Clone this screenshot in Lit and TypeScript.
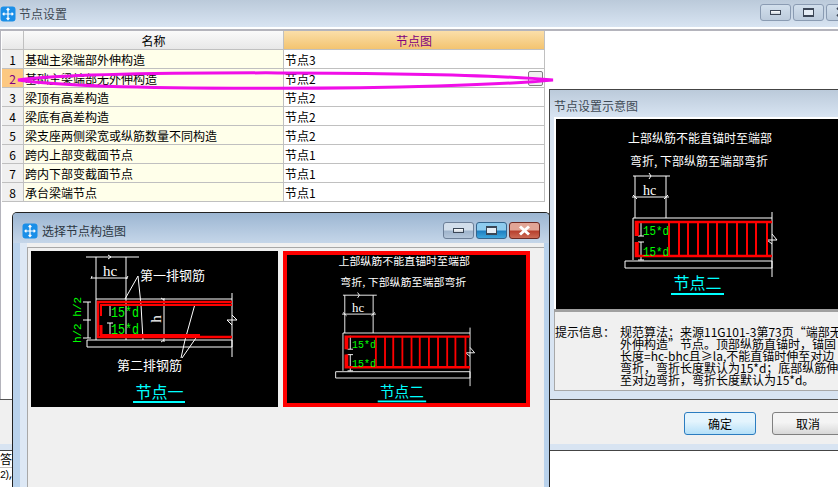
import { LitElement, html, svg, css } from 'lit';
import { customElement } from 'lit/decorators.js';

const ROWS = [
  ['基础主梁端部外伸构造', '节点3'],
  ['基础主梁端部无外伸构造', '节点2'],
  ['梁顶有高差构造', '节点2'],
  ['梁底有高差构造', '节点2'],
  ['梁支座两侧梁宽或纵筋数量不同构造', '节点2'],
  ['跨内上部变截面节点', '节点1'],
  ['跨内下部变截面节点', '节点1'],
  ['承台梁端节点', '节点1'],
];

const INFO = [
  '规范算法：来源11G101-3第73页“端部无',
  '外伸构造”节点。顶部纵筋直锚时，锚固',
  '长度=hc-bhc且≥la,不能直锚时伸至对边',
  '弯折，弯折长度默认为15*d；底部纵筋伸',
  '至对边弯折，弯折长度默认为15*d。',
];

const STIRRUPS = [669, 679, 688, 698, 708, 717, 727, 737, 747, 756, 767];

const appIcon = html`<svg class="app-icon" viewBox="0 0 16 16">
  <rect x="0.5" y="0.5" width="15" height="15" rx="3" fill="#1a8fe8" />
  <path
    d="M8 2.5v11M3 8h10M6.6 4 8 2.5 9.4 4M6.6 12 8 13.5 9.4 12M4.4 6.6 3 8l1.4 1.4M11.6 6.6 13 8l-1.4 1.4"
    fill="none"
    stroke="#fff"
    stroke-width="1.2"
  />
</svg>`;

// node 2 is drawn once in the coordinates of the preview window, the thumbnail just uses another viewBox
const nodeTwo = svg`
  <g fill="#fff" font-size="12" text-anchor="middle">
    <text x="700" y="142.5">上部纵筋不能直锚时至端部</text>
    <text x="699" y="165.5">弯折, 下部纵筋至端部弯折</text>
  </g>
  <path d="M633 176H670M649 173l2 3-2 3M635 176V218M666 176V218M632 197H669M633 195l4 4M664 199l4-4
    M633 218H772M772 212V277M633 218V260M625 261H772V268H625ZM641 221V236M638 236H644M641 242V260M638 242H644M638 260H644
    M767 240H777L772 234M767 240L772 244"
    fill="none" stroke="#fff" />
  <text class="serif" x="649.5" y="195" fill="#fff" font-size="14" text-anchor="middle">hc</text>
  <path d="M772 222H636V236M636 242V256H772" fill="none" stroke="#f00" stroke-width="2.6" />
  <path d="M637.5 222V236M637.5 242V256" stroke="#f00" stroke-width="2.6" />
  ${STIRRUPS.map((x) => svg`<path d="M${x} 222V256" stroke="#f00" stroke-width="2" />`)}
  <g class="mono" fill="#0f0" font-size="13">
    <text x="643" y="235" textLength="26" lengthAdjust="spacingAndGlyphs">15*d</text>
    <text x="643" y="256" textLength="26" lengthAdjust="spacingAndGlyphs">15*d</text>
  </g>
  <text x="697.5" y="289" fill="#0ff" font-size="16" text-anchor="middle">节点二</text>
  <path d="M671 294H724" stroke="#0ff" stroke-width="2" />
`;

@customElement('app-root')
export class AppRoot extends LitElement {
  static styles = css`
    :host {
      display: block;
      position: relative;
      width: 838px;
      height: 487px;
      overflow: hidden;
      background: #fff;
      font: 12px/1 'Noto Sans CJK SC', 'Liberation Sans', sans-serif;
      color: #000;
    }

    svg text {
      font-family: 'Noto Sans CJK SC', 'Liberation Sans', sans-serif;
    }

    svg .mono,
    svg .mono text {
      font-family: 'Liberation Mono', monospace;
    }

    svg .serif {
      font-family: 'Liberation Serif', serif;
    }

    .main {
      display: flex;
      flex-direction: column;
      height: 451px;
      border-bottom: 1px solid #444;
      box-sizing: border-box;
    }

    .titlebar {
      flex: none;
      display: flex;
      align-items: center;
      gap: 3px;
      height: 27px;
      background: linear-gradient(#bbcada, #d8e4f2);
      color: #3f4a55;
      box-sizing: border-box;
    }

    .titlebar .label {
      flex: 1;
      white-space: nowrap;
      padding-top: 1px;
    }

    .app-icon {
      flex: none;
      width: 16px;
      height: 16px;
    }

    .main > .titlebar {
      overflow: hidden;
    }

    .caption-buttons {
      display: flex;
      gap: 2px;
      margin-right: -19px;
      margin-top: -3px;
    }

    .caption {
      display: flex;
      align-items: center;
      justify-content: center;
      width: 31px;
      height: 17px;
      border: 1px solid #8a9bb2;
      border-radius: 3px;
      box-sizing: border-box;
      background: linear-gradient(#d2dfec, #bccbdc);
    }

    .glyph {
      display: block;
      box-sizing: border-box;
      background: #fff;
      border: 1px solid #3c4656;
    }

    .glyph.min {
      width: 11px;
      height: 5px;
      background: linear-gradient(#fff, #c9d2dc);
    }

    .glyph.max {
      width: 11px;
      height: 9px;
      background: #e6edf5;
      border-width: 2px 1px;
    }

    .caption svg {
      width: 13px;
      height: 10px;
    }

    .content {
      flex: 1;
      min-height: 0;
      border-top: 2px solid #b4b4bc;
      margin-top: 2px;
      padding-left: 1px;
      background: #fff;
      border-left: 1px solid #b4b4bc;
      box-sizing: border-box;
    }

    .grid {
      display: grid;
      grid-template-columns: 22px 260px 261px;
      grid-auto-rows: 19px;
      width: 543px;
    }

    .cell {
      display: flex;
      align-items: center;
      padding: 1px 0 0 1px;
      border-right: 1px solid #c0c0c0;
      border-bottom: 1px solid #c0c0c0;
      box-sizing: border-box;
      white-space: nowrap;
      overflow: hidden;
      position: relative;
    }

    .head {
      justify-content: center;
      padding-left: 0;
      background: linear-gradient(#fafafa, #e8e8e8);
    }

    .head.active {
      background: linear-gradient(#fbdfa9, #f3c470);
      color: #800080;
    }

    .num {
      justify-content: center;
      padding-left: 0;
      background: #f0f0f0;
    }

    .num.current {
      background: #fcc881;
      color: #800080;
    }

    .name {
      background: #ffffea;
    }

    .pick {
      position: absolute;
      right: 1px;
      top: 2px;
      width: 15px;
      height: 15px;
      border: 1px solid #808080;
      border-radius: 2px;
      background: #f0f0f0;
      box-sizing: border-box;
    }

    .footer {
      flex: none;
      display: flex;
      justify-content: flex-end;
      gap: 16px;
      height: 45px;
      padding-top: 12px;
      margin-right: -6px;
      border-top: 1px solid #555;
      background: #f0f0f0;
      box-sizing: border-box;
    }

    .btn {
      width: 72px;
      height: 23px;
      display: flex;
      align-items: center;
      justify-content: center;
      border: 1px solid #808080;
      border-radius: 3px;
      background: linear-gradient(#f4f4f4 45%, #d8d8d8);
      box-sizing: border-box;
    }

    .btn.primary {
      border: 1px solid #2b7cc0;
      background: linear-gradient(#e4f4fd 40%, #b5e0f8);
    }

    .band {
      flex: none;
      height: 6px;
      background: #d8e4f2;
    }

    .log {
      position: absolute;
      left: 0;
      top: 451px;
      width: 12px;
      height: 36px;
      overflow: hidden;
      white-space: nowrap;
    }

    .log-top {
      height: 16px;
      line-height: 16px;
      border-bottom: 1px solid #c0c0c0;
    }

    .log-bottom {
      font: 10px/16px 'Liberation Mono', monospace;
      letter-spacing: -2px;
    }

    .scribble {
      position: absolute;
      left: 0;
      top: 60px;
      width: 560px;
      height: 40px;
      pointer-events: none;
    }

    .preview {
      position: absolute;
      left: 549px;
      top: 89px;
      width: 289px;
      height: 310px;
      display: flex;
      flex-direction: column;
      border-top: 1px solid #444;
      border-left: 1px solid #444;
      box-sizing: border-box;
      background: #d8e4f2;
    }

    .preview .titlebar {
      padding: 3px 0 0 4px;
      height: 27px;
    }

    .preview-body {
      flex: 1;
      display: flex;
      flex-direction: column;
      padding: 0 0 8px 4px;
      min-height: 0;
    }

    .canvas-wrap {
      padding: 2px 0 0 2px;
      background: #fff;
      border-bottom: 3px solid #a0a0a0;
    }

    .canvas-wrap svg {
      display: block;
      width: 282px;
      height: 190px;
      background: #000;
    }

    .info {
      flex: 1;
      display: flex;
      gap: 10px;
      padding: 14px 0 0 0;
      background: #f0f0f0;
      border-left: 1px solid #a8a8a8;
      border-bottom: 1px solid #a8a8a8;
      overflow: hidden;
      white-space: nowrap;
    }

    .info-label {
      flex: none;
      width: 55px;
      text-align: right;
    }

    .info-lines div {
      height: 12px;
      line-height: 12px;
    }

    .dialog {
      position: absolute;
      left: 12px;
      top: 212px;
      width: 538px;
      height: 280px;
      display: flex;
      flex-direction: column;
      border: 1px solid #222;
      border-bottom: 0;
      border-radius: 5px 5px 0 0;
      background: #b9d2ec;
      box-sizing: border-box;
      overflow: hidden;
    }

    .dialog-title {
      flex: none;
      display: flex;
      align-items: center;
      gap: 4px;
      height: 30px;
      padding: 5px 9px 0 9px;
      background: linear-gradient(#9cb6d2, #c5d6e9);
      color: #2c3742;
      box-sizing: border-box;
    }

    .dialog-title .label {
      flex: 1;
    }

    .dialog-buttons {
      display: flex;
      gap: 2px;
    }

    .dialog-btn {
      display: flex;
      align-items: center;
      justify-content: center;
      width: 31px;
      height: 17px;
      border-radius: 3px;
      border: 1px solid #6c7f98;
      box-sizing: border-box;
      background: linear-gradient(#d2deeb 45%, #9fb4cc 55%, #b4c6da);
    }

    .dialog-btn.on {
      border-color: #35648c;
      background: linear-gradient(#8ecbee 45%, #1f80c2 55%, #3fa6dc);
    }

    .dialog-btn.close {
      border-color: #6d2a24;
      background: linear-gradient(#e2a596 45%, #b8402e 55%, #cc6a55);
    }

    .dialog-btn .glyph {
      border-color: #3a4656;
    }

    .dialog-btn svg {
      width: 15px;
      height: 11px;
    }

    .dialog-frame {
      flex: 1;
      padding-left: 7px;
      padding-right: 5px;
      min-height: 0;
    }

    .dialog-inner {
      height: 100%;
      padding: 4px 0 0 7px;
      background: linear-gradient(90deg, #dde8f5 7px, #f0f0f0 7px);
      background-color: #f0f0f0;
      box-sizing: border-box;
    }

    .thumbs {
      display: grid;
      grid-template-columns: 247px 247px;
      gap: 5px;
      height: 100%;
      padding: 3px 0 0 3px;
      background: #f0f0f0;
      border-left: 1px solid #a8a8a8;
      border-top: 1px solid #a8a8a8;
      box-sizing: border-box;
      align-content: start;
    }

    .thumb {
      display: block;
      width: 247px;
      height: 156px;
      background: #000;
    }

    .thumb.selected {
      outline: 4px solid #f00;
      outline-offset: -4px;
    }
  `;

  private renderCaption() {
    return html`<div class="caption-buttons">
      <div class="caption"><span class="glyph min"></span></div>
      <div class="caption"><span class="glyph max"></span></div>
      <div class="caption">
        <svg viewBox="0 0 13 10"><path d="M2 1l9 8M11 1l-9 8" stroke="#3c4656" stroke-width="2" /></svg>
      </div>
    </div>`;
  }

  private renderGrid() {
    return html`<div class="grid">
      <div class="cell head"></div>
      <div class="cell head">名称</div>
      <div class="cell head active">节点图</div>
      ${ROWS.map(
        ([name, node], i) => html`
          <div class="cell num ${i === 1 ? 'current' : ''}">${i + 1}</div>
          <div class="cell name">${name}</div>
          <div class="cell">${node}${i === 1 ? html`<span class="pick"></span>` : ''}</div>
        `,
      )}
    </div>`;
  }

  private renderNodeOne() {
    return html`<svg class="thumb" viewBox="31 251 247 156">
      <path d="M86 257H139M108 255l3 2-3 2M96 257V340M126 257V340M92 278H128M92 276l-1 3M128 276l-2 3
        M96 299H232M232 293V357M87 340H232V347H87ZM88 302V338M83 302H91M83 320H91M83 338H91
        M110 305V316M107 305H113M110 323V337M107 323H113M107 337H113M164 298V342M161 298l3 2M161 342l3-2
        M138 276L125 299M138 276L141 305L143 340M195 304L185 340L181 358M198 335L182 358
        M227 320H237L232 315M227 320L232 325"
        fill="none" stroke="#fff" />
      <text class="serif" x="110" y="276" fill="#fff" font-size="15" text-anchor="middle">hc</text>
      <g fill="#fff" font-size="13">
        <text x="140" y="280">第一排钢筋</text>
        <text x="117" y="370">第二排钢筋</text>
      </g>
      <text class="serif" transform="translate(161 319) rotate(-90)" fill="#fff" font-size="15" text-anchor="middle">h</text>
      <path d="M232 302H98V337H232" fill="none" stroke="#f00" stroke-width="2.4" />
      <path d="M232 305H101V316M101 326V335H200" fill="none" stroke="#f00" stroke-width="2" />
      <path d="M101 325V335" stroke="#f00" stroke-width="3" />
      <g class="mono" fill="#0f0" font-size="14">
        <text x="111" y="317" textLength="28" lengthAdjust="spacingAndGlyphs">15*d</text>
        <text x="111" y="334" textLength="28" lengthAdjust="spacingAndGlyphs">15*d</text>
      </g>
      <text class="mono" transform="translate(81 320) rotate(-90)" fill="#0f0" font-size="11" text-anchor="middle">h/2 h/2</text>
      <text x="159.5" y="398" fill="#0ff" font-size="16" text-anchor="middle">节点一</text>
      <path d="M133 402H185" stroke="#0ff" stroke-width="2" />
    </svg>`;
  }

  render() {
    return html`
      <div class="main">
        <div class="titlebar">
          ${appIcon}
          <span class="label">节点设置</span>
          ${this.renderCaption()}
        </div>
        <div class="content">${this.renderGrid()}</div>
        <div class="footer">
          <div class="btn primary">确定</div>
          <div class="btn">取消</div>
        </div>
        <div class="band"></div>
      </div>

      <div class="log">
        <div class="log-top">答</div>
        <div class="log-bottom">2),</div>
      </div>

      <div class="preview">
        <div class="titlebar"><span class="label">节点设置示意图</span></div>
        <div class="preview-body">
          <div class="canvas-wrap">
            <svg viewBox="556 119 282 190">${nodeTwo}</svg>
          </div>
          <div class="info">
            <span class="info-label">提示信息：</span>
            <div class="info-lines">${INFO.map((line) => html`<div>${line}</div>`)}</div>
          </div>
        </div>
      </div>

      <svg class="scribble" viewBox="0 60 560 40">
        <path d="M18 80C100 70 450 71 553 80C450 90 100 92 18 80Z" fill="none" stroke="#f00ee8" stroke-width="3" />
      </svg>

      <div class="dialog">
        <div class="dialog-title">
          ${appIcon}
          <span class="label">选择节点构造图</span>
          <div class="dialog-buttons">
            <div class="dialog-btn"><span class="glyph min"></span></div>
            <div class="dialog-btn on"><span class="glyph max"></span></div>
            <div class="dialog-btn close">
              <svg viewBox="0 0 15 11"><path d="M3 1.5l9 8M12 1.5l-9 8" stroke="#fff" stroke-width="3" /></svg>
            </div>
          </div>
        </div>
        <div class="dialog-frame">
          <div class="dialog-inner">
            <div class="thumbs">
              ${this.renderNodeOne()}
              <svg class="thumb selected" viewBox="567.4 126.9 270.2 173.3" preserveAspectRatio="none">${nodeTwo}</svg>
            </div>
          </div>
        </div>
      </div>
    `;
  }
}
